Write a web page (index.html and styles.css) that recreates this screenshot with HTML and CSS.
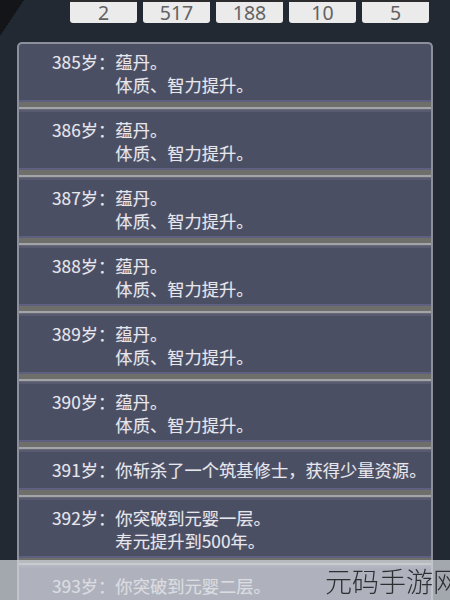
FILE: index.html
```html
<!DOCTYPE html>
<html lang="zh">
<head>
<meta charset="utf-8">
<link rel="stylesheet" href="styles.css">
</head>
<body>
<div class="stats">
  <div class="stat">2</div>
  <div class="stat">517</div>
  <div class="stat">188</div>
  <div class="stat">10</div>
  <div class="stat">5</div>
</div>
<div class="panel">
  <div class="row"><span class="age">385岁：</span><div class="txt"><div>蕴丹。</div><div>体质、智力提升。</div></div></div>
  <div class="row"><span class="age">386岁：</span><div class="txt"><div>蕴丹。</div><div>体质、智力提升。</div></div></div>
  <div class="row"><span class="age">387岁：</span><div class="txt"><div>蕴丹。</div><div>体质、智力提升。</div></div></div>
  <div class="row"><span class="age">388岁：</span><div class="txt"><div>蕴丹。</div><div>体质、智力提升。</div></div></div>
  <div class="row"><span class="age">389岁：</span><div class="txt"><div>蕴丹。</div><div>体质、智力提升。</div></div></div>
  <div class="row"><span class="age">390岁：</span><div class="txt"><div>蕴丹。</div><div>体质、智力提升。</div></div></div>
  <div class="row"><span class="age">391岁：</span><div class="txt"><div>你斩杀了一个筑基修士，获得少量资源。</div></div></div>
  <div class="row"><span class="age">392岁：</span><div class="txt"><div>你突破到元婴一层。</div><div>寿元提升到500年。</div></div></div>
  <div class="row"><span class="age">393岁：</span><div class="txt"><div>你突破到元婴二层。</div></div></div>
</div>
<div class="watermark"><span class="wm-text">元码手游网</span></div>
</body>
</html>
```
FILE: styles.css
```css
html, body {
  margin: 0;
  padding: 0;
}
body {
  width: 450px;
  height: 600px;
  overflow: hidden;
  background-color: #222932;
  background-image: linear-gradient(to bottom right, #131518 50%, transparent 50%);
  background-size: 24px 36px;
  background-repeat: no-repeat;
  font-family: "Noto Sans CJK SC", "Noto Sans", sans-serif;
}
.stats {
  display: flex;
  gap: 6px;
  padding-left: 70px;
}
.stat {
  width: 67px;
  height: 21px;
  border-top: 2px solid #2c2c2e;
  background: #ebebeb;
  border-radius: 0 0 3px 3px;
  color: #626262;
  font-family: "Noto Sans", "Liberation Sans", sans-serif;
  font-size: 19.5px;
  line-height: 21px;
  text-align: center;
}
.panel {
  margin: 19px 0 0 17px;
  width: 412px;
  border: 2px solid #8d909c;
  border-bottom: none;
  border-radius: 5px 5px 0 0;
  background: #4b4f64;
}
.row {
  display: flex;
  padding: 6px 0 16px 33px;
  position: relative;
  color: #e6e6ec;
  font-size: 17.3px;
  line-height: 23px;
  text-shadow: 0 0 1px rgba(255,255,255,0.25);
}
.row::after {
  content: "";
  position: absolute;
  left: 0;
  right: 0;
  bottom: 0;
  height: 12px;
  background: linear-gradient(to bottom,
    #5f6080 0, #5f6080 2px,
    #6e6f6a 2px, #6e6f6a 7px,
    #a2a4aa 7px, #a2a4aa 9px,
    #676974 9px, #676974 10px,
    #585b70 10px, #585b70 12px);
}
.age {
  white-space: nowrap;
}
.txt {
  min-height: 26px;
}
.watermark {
  position: fixed;
  left: 0;
  right: 0;
  bottom: 0;
  height: 40px;
  background: rgba(214, 216, 222, 0.72);
  display: flex;
  justify-content: flex-end;
  align-items: center;
  overflow: hidden;
}
.wm-text {
  margin-right: -10px;
  font-size: 27px;
  font-weight: 300;
  color: #2e2f33;
  line-height: 1;
}
```
